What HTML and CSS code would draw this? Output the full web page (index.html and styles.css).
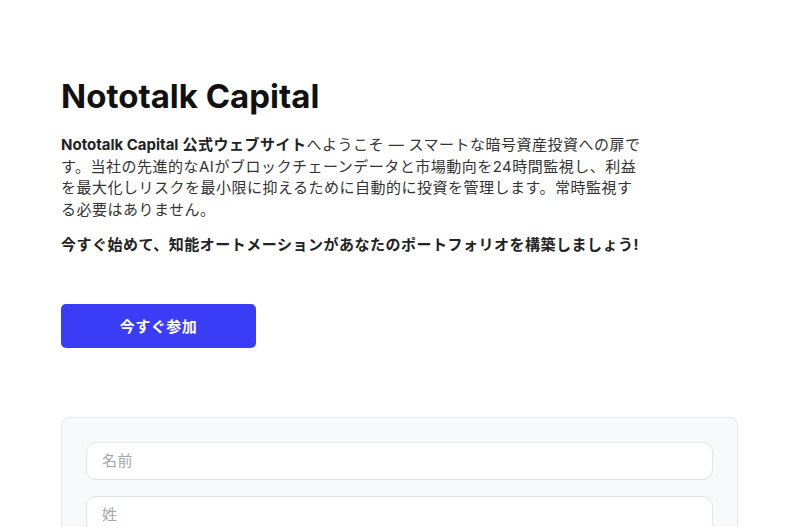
FILE: index.html
```html
<!DOCTYPE html>
<html lang="ja">
<head>
<meta charset="utf-8">
<title>Nototalk Capital</title>
<link rel="stylesheet" href="styles.css">
</head>
<body>
<main class="page">
  <section class="hero">
    <h1 class="title">Nototalk Capital</h1>
    <p class="lead"><strong><span class="latin">Nototalk Capital</span> 公式ウェブサイト</strong>へようこそ <span class="latin">—</span> スマートな暗号資産投資への扉です。当社の先進的なAIがブロックチェーンデータと市場動向を24時間監視し、利益を最大化しリスクを最小限に抑えるために自動的に投資を管理します。常時監視する必要はありません。</p>
    <p class="cta-text">今すぐ始めて、知能オートメーションがあなたのポートフォリオを構築しましょう!</p>
    <button class="join" type="button">今すぐ参加</button>
  </section>
  <form class="card">
    <input class="field" type="text" placeholder="名前">
    <input class="field" type="text" placeholder="姓">
  </form>
</main>
</body>
</html>
```

FILE: styles.css
```css
* { box-sizing: border-box; }
html, body { margin: 0; background: #ffffff; }
body {
  font-family: Inter, "Noto Sans CJK JP", "Noto Sans", sans-serif;
  color: #2b2b2b;
}
.page {
  padding: 76px 62px 40px 61px;
  display: flex;
  flex-direction: column;
}
.hero {
  display: flex;
  flex-direction: column;
  align-items: flex-start;
}
.title {
  margin: 0;
  font-size: 33px;
  line-height: 40px;
  font-weight: 700;
  color: #111111;
}
.lead {
  margin: 18px 0 0;
  width: 584px;
  font-size: 15px;
  line-height: 21.7px;
  letter-spacing: 0.5px;
  color: #333333;
}
.lead strong { font-weight: 700; color: #222222; }
.latin { letter-spacing: 0; }
.cta-text {
  margin: 13px 0 0;
  font-size: 15px;
  line-height: 22px;
  letter-spacing: 0.5px;
  font-weight: 700;
  color: #222222;
}
.join {
  margin-top: 48px;
  width: 195px;
  height: 44px;
  border: none;
  border-radius: 5px;
  background: #3b3cf6;
  color: #ffffff;
  font-family: inherit;
  font-size: 15px;
  letter-spacing: 0.5px;
  font-weight: 700;
  cursor: pointer;
}
.card {
  margin: 69px 0 0;
  padding: 24px;
  background: #f8f9fb;
  border: 1px solid #e3e6ef;
  border-radius: 8px;
  display: flex;
  flex-direction: column;
  gap: 16px;
}
.field {
  height: 38px;
  padding: 0 15px;
  background: #ffffff;
  border: 1px solid #dfe3ec;
  border-radius: 10px;
  font-family: inherit;
  font-size: 15px;
  letter-spacing: 0.5px;
  color: #333333;
}
.field::placeholder { color: #a3a6ad; }
```
